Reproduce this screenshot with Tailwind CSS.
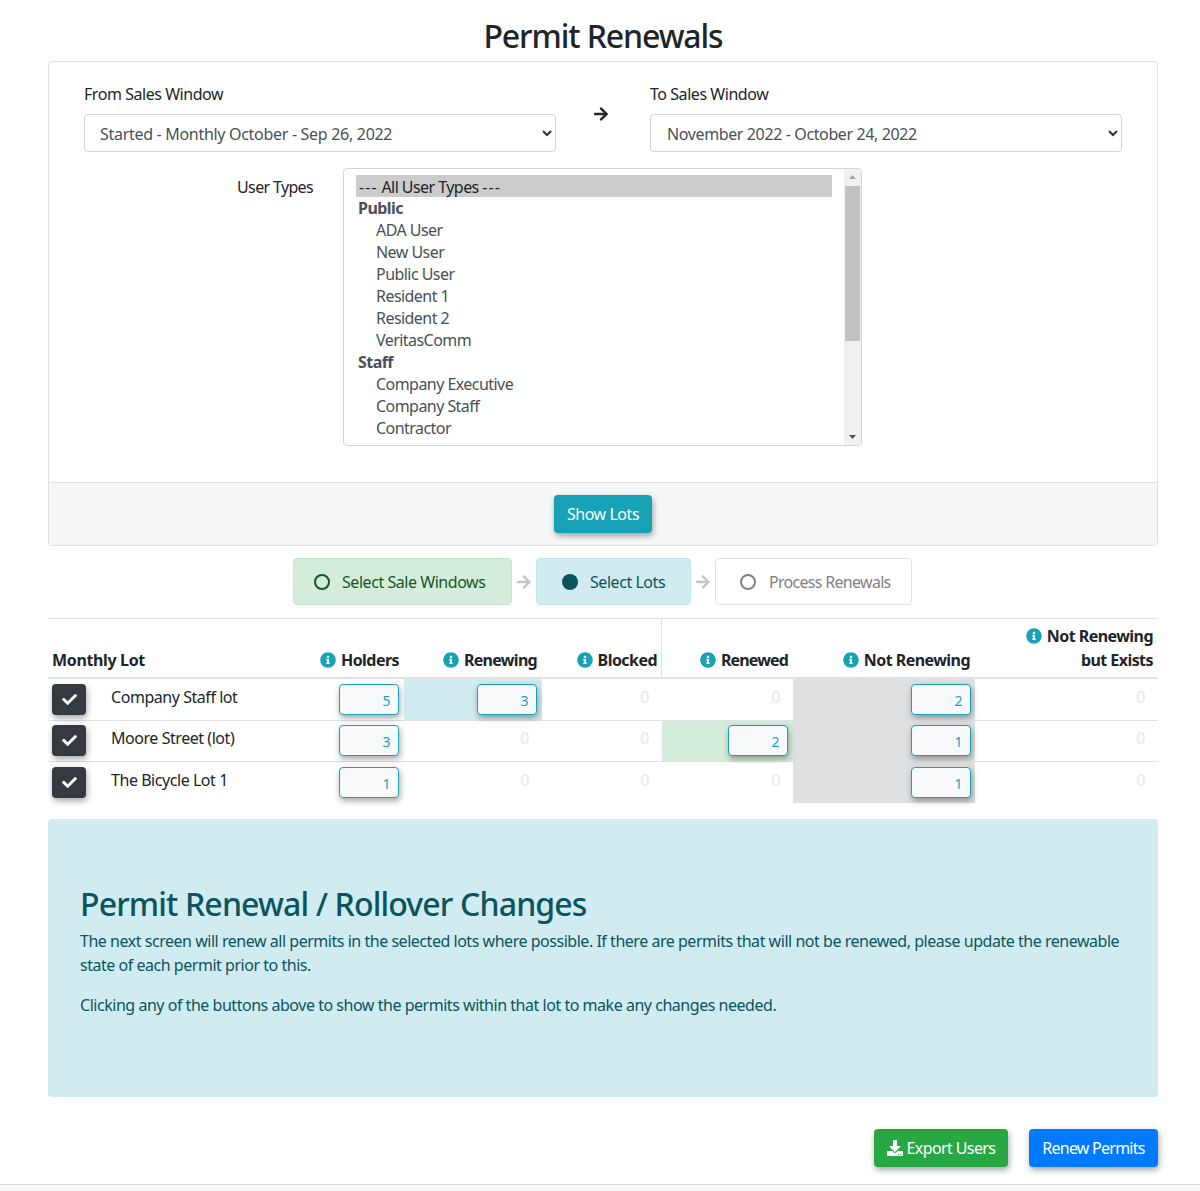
<!DOCTYPE html>
<html lang="en">

<head>
    <meta charset="UTF-8">
    <meta name="viewport" content="width=device-width, initial-scale=1.0">
    <title>Permit Renewals</title>
    <script src="https://cdn.jsdelivr.net/npm/@tailwindcss/browser@4"></script>
</head>

<body class="bg-white h-[1191px] overflow-hidden font-['Noto_Sans',sans-serif] text-[16px] tracking-[-0.45px] text-[#212529]">
    <div class="w-[1110px] ml-[48px] h-[1184px]">
        <h1 class="h-[61px] pt-[12px] text-center text-[32px] leading-[48px] font-medium tracking-[-1.1px]">Permit Renewals</h1>

        <div class="h-[485px] border border-[#dfdfdf] rounded flex flex-col">
            <div class="h-[420px] pt-[20px] px-[35px]">
                <div class="flex">
                    <div class="w-[472px]">
                        <label class="block h-[32px] leading-[24px]">From Sales Window</label>
                        <div class="relative">
                            <select class="appearance-none w-full h-[38px] pl-[15px] pt-[2px] border border-[#ced4da] rounded text-[#495057] tracking-[-0.3px]">
                                <option>Started - Monthly October - Sep 26, 2022</option>
                            </select>
                            <svg class="absolute right-[4px] top-[15px] w-[10px] h-[8px]" viewBox="0 0 10 8"><path d="M1 2l4 4 4-4" fill="none" stroke="#333" stroke-width="2"/></svg>
                        </div>
                    </div>
                    <div class="w-[94px] flex justify-center pt-[24px] pr-[4px]">
                        <svg class="w-[14px] h-[16px]" viewBox="0 0 448 512"><path fill="#212529" d="M190.500 66.900l22.200-22.200c9.400-9.400 24.600-9.400 33.900 0L441 239c9.400 9.400 9.400 24.600 0 33.900L246.600 467.300c-9.400 9.400-24.600 9.400-33.900 0l-22.200-22.200c-9.500-9.500-9.300-25 .4-34.300L311.400 296H24c-13.300 0-24-10.700-24-24v-32c0-13.300 10.700-24 24-24h287.400L190.900 101.200c-9.800-9.300-10-24.800-.4-34.300z"/></svg>
                    </div>
                    <div class="w-[472px]">
                        <label class="block h-[32px] leading-[24px]">To Sales Window</label>
                        <div class="relative">
                            <select class="appearance-none w-full h-[38px] pl-[16px] pt-[2px] border border-[#ced4da] rounded text-[#495057] tracking-[-0.38px]">
                                <option>November 2022 - October 24, 2022</option>
                            </select>
                            <svg class="absolute right-[4px] top-[15px] w-[10px] h-[8px]" viewBox="0 0 10 8"><path d="M1 2l4 4 4-4" fill="none" stroke="#333" stroke-width="2"/></svg>
                        </div>
                    </div>
                </div>

                <div class="flex mt-[16px]">
                    <label class="w-[229px] text-right pt-[7px] leading-[24px] tracking-[-0.65px]">User Types</label>
                    <div class="ml-[30px] w-[519px] h-[278px] border border-[#ced4da] rounded flex overflow-hidden text-[#495057] leading-[22px] tracking-[-0.55px]">
                        <div class="w-[501px] pl-[12px] pt-[6px] pr-[12px]">
                            <div class="pl-[3px] h-[22px] leading-[24px] bg-[#cccccc] text-[#212529]"><span class="tracking-[1.1px]">---</span> All User Types <span class="tracking-[1.1px]">---</span></div>
                            <div class="pl-[2px] font-bold">Public</div>
                            <div class="pl-[20px]">ADA User</div>
                            <div class="pl-[20px]">New User</div>
                            <div class="pl-[20px]">Public User</div>
                            <div class="pl-[20px]">Resident 1</div>
                            <div class="pl-[20px]">Resident 2</div>
                            <div class="pl-[20px]">VeritasComm</div>
                            <div class="pl-[2px] font-bold">Staff</div>
                            <div class="pl-[20px]">Company Executive</div>
                            <div class="pl-[20px]">Company Staff</div>
                            <div class="pl-[20px]">Contractor</div>
                            <div class="pl-[20px] pt-[1px]">Guard</div>
                        </div>
                        <div class="w-[17px] bg-[#f1f1f1] flex flex-col">
                            <svg class="w-[17px] h-[17px]" viewBox="0 0 17 17"><path d="M5 10l3.500-4 3.500 4z" fill="#a3a3a3"/></svg>
                            <div class="w-[15px] ml-[1px] h-[155px] bg-[#c1c1c1]"></div>
                            <div class="flex-1"></div>
                            <svg class="w-[17px] h-[17px]" viewBox="0 0 17 17"><path d="M5 7l3.500 4 3.500-4z" fill="#505050"/></svg>
                        </div>
                    </div>
                </div>
            </div>
            <div class="flex-1 bg-[#f7f7f7] border-t border-[#dfdfdf] rounded-b flex justify-center pt-[12px]">
                <button class="w-[98px] h-[38px] rounded bg-[#17a2b8] text-white shadow-[1px_3px_6px_rgba(0,0,0,0.35)]">Show Lots</button>
            </div>
        </div>

        <div class="flex justify-center items-center mt-[12px] ml-[-1px] h-[47px]">
            <div class="w-[219px] h-full flex items-center pl-[20px] rounded bg-[#d4edda] border border-[#c3e6cb] text-[#155724]">
                <span class="w-[16px] h-[16px] rounded-full border-2 border-[#155724] mr-[12px]"></span>Select Sale Windows
            </div>
            <svg class="w-[24px] h-[16px]" viewBox="-5 0 24 16"><path fill="#c4c4c4" transform="scale(0.031)" d="M190.500 66.900l22.200-22.200c9.400-9.400 24.600-9.400 33.900 0L441 239c9.400 9.400 9.400 24.600 0 33.900L246.600 467.300c-9.400 9.400-24.600 9.400-33.900 0l-22.200-22.200c-9.500-9.500-9.300-25 .4-34.300L311.400 296H24c-13.300 0-24-10.700-24-24v-32c0-13.300 10.700-24 24-24h287.400L190.900 101.200c-9.800-9.300-10-24.800-.4-34.300z"/></svg>
            <div class="w-[155px] h-full flex items-center pl-[25px] rounded bg-[#d1ecf1] border border-[#bee5eb] text-[#0c5460]">
                <span class="w-[16px] h-[16px] rounded-full bg-[#0c5460] mr-[12px]"></span>Select Lots
            </div>
            <svg class="w-[24px] h-[16px]" viewBox="-5 0 24 16"><path fill="#c4c4c4" transform="scale(0.031)" d="M190.500 66.900l22.200-22.200c9.400-9.400 24.600-9.400 33.900 0L441 239c9.400 9.400 9.400 24.600 0 33.900L246.600 467.300c-9.400 9.400-24.600 9.400-33.900 0l-22.200-22.200c-9.500-9.500-9.300-25 .4-34.300L311.400 296H24c-13.300 0-24-10.700-24-24v-32c0-13.300 10.700-24 24-24h287.400L190.900 101.200c-9.800-9.300-10-24.800-.4-34.300z"/></svg>
            <div class="w-[197px] h-full flex items-center pl-[24px] rounded bg-white border border-[#dee2e6] text-[#818182] tracking-[-0.7px]">
                <span class="w-[16px] h-[16px] rounded-full border-2 border-[#818182] mr-[13px]"></span>Process Renewals
            </div>
        </div>

        <table class="mt-[13px] w-[1110px] table-fixed border-collapse">
            <colgroup>
                <col class="w-[252px]">
                <col class="w-[104px]">
                <col class="w-[138px]">
                <col class="w-[120px]">
                <col class="w-[131px]">
                <col class="w-[182px]">
                <col class="w-[183px]">
            </colgroup>
            <thead>
                <tr class="h-[59px] border-t border-[#dee2e6] border-b-2 font-bold text-right align-bottom leading-[24px] tracking-[-0.55px]">
                    <th class="text-left px-[4px] pb-[5px] tracking-[-0.35px]">Monthly Lot</th>
                    <th class="pr-[5px] pb-[5px] whitespace-nowrap"><svg class="inline w-[16px] h-[16px] mr-[5px] mb-[3px]" viewBox="0 0 512 512"><path fill="#17a2b8" d="M256 8C119.043 8 8 119.083 8 256c0 136.997 111.043 248 248 248s248-111.003 248-248C504 119.083 392.957 8 256 8zm0 110c23.196 0 42 18.804 42 42s-18.804 42-42 42-42-18.804-42-42 18.804-42 42-42zm56 254c0 6.627-5.373 12-12 12h-88c-6.627 0-12-5.373-12-12v-24c0-6.627 5.373-12 12-12h12v-64h-12c-6.627 0-12-5.373-12-12v-24c0-6.627 5.373-12 12-12h64c6.627 0 12 5.373 12 12v100h12c6.627 0 12 5.373 12 12v24z"/></svg>Holders</th>
                    <th class="pr-[5px] pb-[5px] whitespace-nowrap tracking-[-0.7px]"><svg class="inline w-[16px] h-[16px] mr-[5px] mb-[3px]" viewBox="0 0 512 512"><path fill="#17a2b8" d="M256 8C119.043 8 8 119.083 8 256c0 136.997 111.043 248 248 248s248-111.003 248-248C504 119.083 392.957 8 256 8zm0 110c23.196 0 42 18.804 42 42s-18.804 42-42 42-42-18.804-42-42 18.804-42 42-42zm56 254c0 6.627-5.373 12-12 12h-88c-6.627 0-12-5.373-12-12v-24c0-6.627 5.373-12 12-12h12v-64h-12c-6.627 0-12-5.373-12-12v-24c0-6.627 5.373-12 12-12h64c6.627 0 12 5.373 12 12v100h12c6.627 0 12 5.373 12 12v24z"/></svg>Renewing</th>
                    <th class="pr-[5px] pb-[5px] whitespace-nowrap shadow-[inset_-1px_0_0_#dee2e6]"><svg class="inline w-[16px] h-[16px] mr-[5px] mb-[3px]" viewBox="0 0 512 512"><path fill="#17a2b8" d="M256 8C119.043 8 8 119.083 8 256c0 136.997 111.043 248 248 248s248-111.003 248-248C504 119.083 392.957 8 256 8zm0 110c23.196 0 42 18.804 42 42s-18.804 42-42 42-42-18.804-42-42 18.804-42 42-42zm56 254c0 6.627-5.373 12-12 12h-88c-6.627 0-12-5.373-12-12v-24c0-6.627 5.373-12 12-12h12v-64h-12c-6.627 0-12-5.373-12-12v-24c0-6.627 5.373-12 12-12h64c6.627 0 12 5.373 12 12v100h12c6.627 0 12 5.373 12 12v24z"/></svg>Blocked</th>
                    <th class="pr-[5px] pb-[5px] whitespace-nowrap tracking-[-0.85px]"><svg class="inline w-[16px] h-[16px] mr-[5px] mb-[3px]" viewBox="0 0 512 512"><path fill="#17a2b8" d="M256 8C119.043 8 8 119.083 8 256c0 136.997 111.043 248 248 248s248-111.003 248-248C504 119.083 392.957 8 256 8zm0 110c23.196 0 42 18.804 42 42s-18.804 42-42 42-42-18.804-42-42 18.804-42 42-42zm56 254c0 6.627-5.373 12-12 12h-88c-6.627 0-12-5.373-12-12v-24c0-6.627 5.373-12 12-12h12v-64h-12c-6.627 0-12-5.373-12-12v-24c0-6.627 5.373-12 12-12h64c6.627 0 12 5.373 12 12v100h12c6.627 0 12 5.373 12 12v24z"/></svg>Renewed</th>
                    <th class="pr-[5px] pb-[5px] whitespace-nowrap"><svg class="inline w-[16px] h-[16px] mr-[5px] mb-[3px]" viewBox="0 0 512 512"><path fill="#17a2b8" d="M256 8C119.043 8 8 119.083 8 256c0 136.997 111.043 248 248 248s248-111.003 248-248C504 119.083 392.957 8 256 8zm0 110c23.196 0 42 18.804 42 42s-18.804 42-42 42-42-18.804-42-42 18.804-42 42-42zm56 254c0 6.627-5.373 12-12 12h-88c-6.627 0-12-5.373-12-12v-24c0-6.627 5.373-12 12-12h12v-64h-12c-6.627 0-12-5.373-12-12v-24c0-6.627 5.373-12 12-12h64c6.627 0 12 5.373 12 12v100h12c6.627 0 12 5.373 12 12v24z"/></svg>Not Renewing</th>
                    <th class="pr-[5px] pb-[5px] whitespace-nowrap"><svg class="inline w-[16px] h-[16px] mr-[5px] mb-[3px]" viewBox="0 0 512 512"><path fill="#17a2b8" d="M256 8C119.043 8 8 119.083 8 256c0 136.997 111.043 248 248 248s248-111.003 248-248C504 119.083 392.957 8 256 8zm0 110c23.196 0 42 18.804 42 42s-18.804 42-42 42-42-18.804-42-42 18.804-42 42-42zm56 254c0 6.627-5.373 12-12 12h-88c-6.627 0-12-5.373-12-12v-24c0-6.627 5.373-12 12-12h12v-64h-12c-6.627 0-12-5.373-12-12v-24c0-6.627 5.373-12 12-12h64c6.627 0 12 5.373 12 12v100h12c6.627 0 12 5.373 12 12v24z"/></svg>Not Renewing<br>but Exists</th>
                </tr>
            </thead>
            <tbody class="text-right align-top">
                <tr class="h-[43px] border-b border-[#dee2e6]">
                    <td class="text-left pt-[5px] pl-[4px]">
                        <div class="flex">
                            <button class="w-[34px] h-[31px] rounded bg-[#343a40] flex items-center justify-center shadow-[1px_3px_6px_rgba(0,0,0,0.35)]"><svg class="w-[15px] h-[15px]" viewBox="0 0 512 512"><path fill="#fff" d="M173.898 439.404l-166.400-166.400c-9.997-9.997-9.997-26.206 0-36.204l36.203-36.204c9.997-9.998 26.207-9.998 36.204 0L192 312.690 432.095 72.596c9.997-9.997 26.207-9.997 36.204 0l36.203 36.204c9.997 9.997 9.997 26.206 0 36.204l-294.400 294.401c-9.998 9.997-26.207 9.997-36.204-.001z"/></svg></button>
                            <span class="ml-[25px] mt-[1px] leading-[24px]">Company Staff lot</span>
                        </div>
                    </td>
                    <td class="pt-[5px] pr-[5px]"><input readonly value="5" class="w-[60px] h-[31px] pt-[2px] pr-[8px] text-right text-[14px] rounded border border-[#17a2b8] bg-[#f8f9fa] text-[#17a2b8] shadow-[1px_3px_6px_rgba(0,0,0,0.35)]"></td>
                    <td class="pt-[5px] pr-[5px] bg-[#d1ecf1]"><input readonly value="3" class="w-[60px] h-[31px] pt-[2px] pr-[8px] text-right text-[14px] rounded border border-[#17a2b8] bg-[#f8f9fa] text-[#17a2b8] shadow-[1px_3px_6px_rgba(0,0,0,0.35)]"></td>
                    <td class="pt-[6px] pr-[13px] text-[#e6e8ea] leading-[24px]">0</td>
                    <td class="pt-[6px] pr-[13px] text-[#e6e8ea] leading-[24px]">0</td>
                    <td class="pt-[5px] pr-[4px] bg-[#dfe0e2]"><input readonly value="2" class="w-[60px] h-[31px] pt-[2px] pr-[8px] text-right text-[14px] rounded border border-[#17a2b8] bg-[#f8f9fa] text-[#17a2b8] shadow-[1px_3px_6px_rgba(0,0,0,0.35)]"></td>
                    <td class="pt-[6px] pr-[13px] text-[#e6e8ea] leading-[24px]">0</td>
                </tr>
                <tr class="h-[41px] border-b border-[#dee2e6]">
                    <td class="text-left pt-[4px] pl-[4px]">
                        <div class="flex">
                            <button class="w-[34px] h-[31px] rounded bg-[#343a40] flex items-center justify-center shadow-[1px_3px_6px_rgba(0,0,0,0.35)]"><svg class="w-[15px] h-[15px]" viewBox="0 0 512 512"><path fill="#fff" d="M173.898 439.404l-166.400-166.400c-9.997-9.997-9.997-26.206 0-36.204l36.203-36.204c9.997-9.998 26.207-9.998 36.204 0L192 312.690 432.095 72.596c9.997-9.997 26.207-9.997 36.204 0l36.203 36.204c9.997 9.997 9.997 26.206 0 36.204l-294.400 294.401c-9.998 9.997-26.207 9.997-36.204-.001z"/></svg></button>
                            <span class="ml-[25px] mt-[1px] leading-[24px]">Moore Street (lot)</span>
                        </div>
                    </td>
                    <td class="pt-[4px] pr-[5px]"><input readonly value="3" class="w-[60px] h-[31px] pt-[2px] pr-[8px] text-right text-[14px] rounded border border-[#17a2b8] bg-[#f8f9fa] text-[#17a2b8] shadow-[1px_3px_6px_rgba(0,0,0,0.35)]"></td>
                    <td class="pt-[5px] pr-[13px] text-[#e6e8ea] leading-[24px]">0</td>
                    <td class="pt-[5px] pr-[13px] text-[#e6e8ea] leading-[24px]">0</td>
                    <td class="pt-[4px] pr-[5px] bg-[#d4edda]"><input readonly value="2" class="w-[60px] h-[31px] pt-[2px] pr-[8px] text-right text-[14px] rounded border border-[#17a2b8] bg-[#f8f9fa] text-[#17a2b8] shadow-[1px_3px_6px_rgba(0,0,0,0.35)]"></td>
                    <td class="pt-[4px] pr-[4px] bg-[#dfe0e2]"><input readonly value="1" class="w-[60px] h-[31px] pt-[2px] pr-[8px] text-right text-[14px] rounded border border-[#17a2b8] bg-[#f8f9fa] text-[#17a2b8] shadow-[1px_3px_6px_rgba(0,0,0,0.35)]"></td>
                    <td class="pt-[5px] pr-[13px] text-[#e6e8ea] leading-[24px]">0</td>
                </tr>
                <tr class="h-[41px]">
                    <td class="text-left pt-[5px] pl-[4px]">
                        <div class="flex">
                            <button class="w-[34px] h-[31px] rounded bg-[#343a40] flex items-center justify-center shadow-[1px_3px_6px_rgba(0,0,0,0.35)]"><svg class="w-[15px] h-[15px]" viewBox="0 0 512 512"><path fill="#fff" d="M173.898 439.404l-166.400-166.400c-9.997-9.997-9.997-26.206 0-36.204l36.203-36.204c9.997-9.998 26.207-9.998 36.204 0L192 312.690 432.095 72.596c9.997-9.997 26.207-9.997 36.204 0l36.203 36.204c9.997 9.997 9.997 26.206 0 36.204l-294.400 294.401c-9.998 9.997-26.207 9.997-36.204-.001z"/></svg></button>
                            <span class="ml-[25px] mt-[1px] leading-[24px]">The Bicycle Lot 1</span>
                        </div>
                    </td>
                    <td class="pt-[5px] pr-[5px]"><input readonly value="1" class="w-[60px] h-[31px] pt-[2px] pr-[8px] text-right text-[14px] rounded border border-[#17a2b8] bg-[#f8f9fa] text-[#17a2b8] shadow-[1px_3px_6px_rgba(0,0,0,0.35)]"></td>
                    <td class="pt-[6px] pr-[13px] text-[#e6e8ea] leading-[24px]">0</td>
                    <td class="pt-[6px] pr-[13px] text-[#e6e8ea] leading-[24px]">0</td>
                    <td class="pt-[6px] pr-[13px] text-[#e6e8ea] leading-[24px]">0</td>
                    <td class="pt-[5px] pr-[4px] bg-[#dfe0e2]"><input readonly value="1" class="w-[60px] h-[31px] pt-[2px] pr-[8px] text-right text-[14px] rounded border border-[#17a2b8] bg-[#f8f9fa] text-[#17a2b8] shadow-[1px_3px_6px_rgba(0,0,0,0.35)]"></td>
                    <td class="pt-[6px] pr-[13px] text-[#e6e8ea] leading-[24px]">0</td>
                </tr>
            </tbody>
        </table>

        <div class="mt-[16px] h-[278px] rounded bg-[#d1ecf1] text-[#0c5460] px-[32px] pt-[61px] tracking-[-0.47px]">
            <h2 class="text-[32px] leading-[48px] font-medium tracking-[-0.85px] mb-[1px]">Permit Renewal / Rollover Changes</h2>
            <p class="leading-[24px]">The next screen will renew all permits in the selected lots where possible. If there are permits that will not be renewed, please update the renewable state of each permit prior to this.</p>
            <p class="leading-[24px] mt-[16px]">Clicking any of the buttons above to show the permits within that lot to make any changes needed.</p>
        </div>

        <div class="flex justify-end mt-[32px] gap-[21px]">
            <button class="w-[134px] h-[38px] rounded bg-[#28a745] text-white flex items-center justify-center tracking-[-0.6px] shadow-[1px_3px_6px_rgba(0,0,0,0.35)]"><svg class="w-[16px] h-[16px] mr-[4px]" viewBox="0 0 512 512"><path fill="#fff" d="M216 0h80c13.300 0 24 10.700 24 24v168h87.700c17.800 0 26.700 21.500 14.100 34.100L269.700 378.300c-7.500 7.500-19.800 7.500-27.300 0L90.100 226.100c-12.600-12.600-3.700-34.100 14.100-34.100H192V24c0-13.300 10.700-24 24-24zm296 376v112c0 13.300-10.700 24-24 24H24c-13.300 0-24-10.700-24-24V376c0-13.300 10.700-24 24-24h146.700l49 49c20.100 20.100 52.500 20.100 72.600 0l49-49H488c13.300 0 24 10.700 24 24zm-124 88c0-11-9-20-20-20s-20 9-20 20 9 20 20 20 20-9 20-20zm64 0c0-11-9-20-20-20s-20 9-20 20 9 20 20 20 20-9 20-20z"/></svg>Export Users</button>
            <button class="w-[129px] h-[38px] rounded bg-[#007bff] text-white tracking-[-0.75px] shadow-[1px_3px_6px_rgba(0,0,0,0.35)]">Renew Permits</button>
        </div>
    </div>
    <div class="h-[7px] bg-[#f8f9fa] border-t border-[#d8d8d8]"></div>
</body>

</html>
